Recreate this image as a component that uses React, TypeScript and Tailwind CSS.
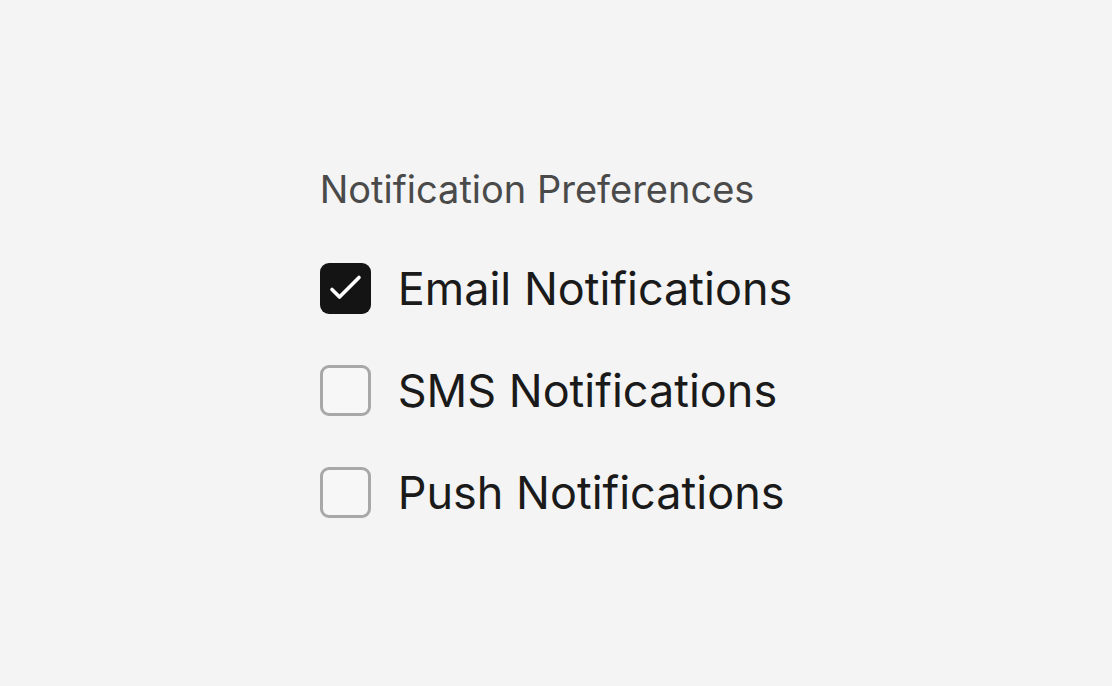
const items = [
  { label: "Email Notifications", checked: true },
  { label: "SMS Notifications", checked: false },
  { label: "Push Notifications", checked: false },
];

const Box = ({ checked }: { checked: boolean }) =>
  checked ? (
    <span className="flex items-center justify-center w-[51px] h-[51px] rounded-[9px] bg-[#141414] shrink-0">
      <svg width="51" height="51" viewBox="0 0 51 51" fill="none">
        <path
          d="M12 26.5 19.5 34 39 14.5"
          stroke="white"
          strokeWidth="3.6"
          strokeLinecap="round"
          strokeLinejoin="round"
        />
      </svg>
    </span>
  ) : (
    <span className="block w-[51px] h-[51px] rounded-[9px] border-[3px] border-[#a8a8a8] bg-[#f7f7f7] shrink-0" />
  );

export default function App() {
  return (
    <div
      className="w-full h-[686px] bg-[#f4f4f4] flex items-center justify-center"
      style={{ fontFamily: "Inter, 'Noto Sans', sans-serif" }}
    >
      <div className="flex flex-col">
        <div className="text-[38px] leading-[40px] text-[#4a4a4a] mb-[54px]">
          Notification Preferences
        </div>
        <div className="flex flex-col gap-[51px]">
          {items.map((it) => (
            <label key={it.label} className="flex items-center gap-[27px]">
              <Box checked={it.checked} />
              <span className="text-[45px] leading-[51px] text-[#1a1a1a]">
                {it.label}
              </span>
            </label>
          ))}
        </div>
      </div>
    </div>
  );
}
